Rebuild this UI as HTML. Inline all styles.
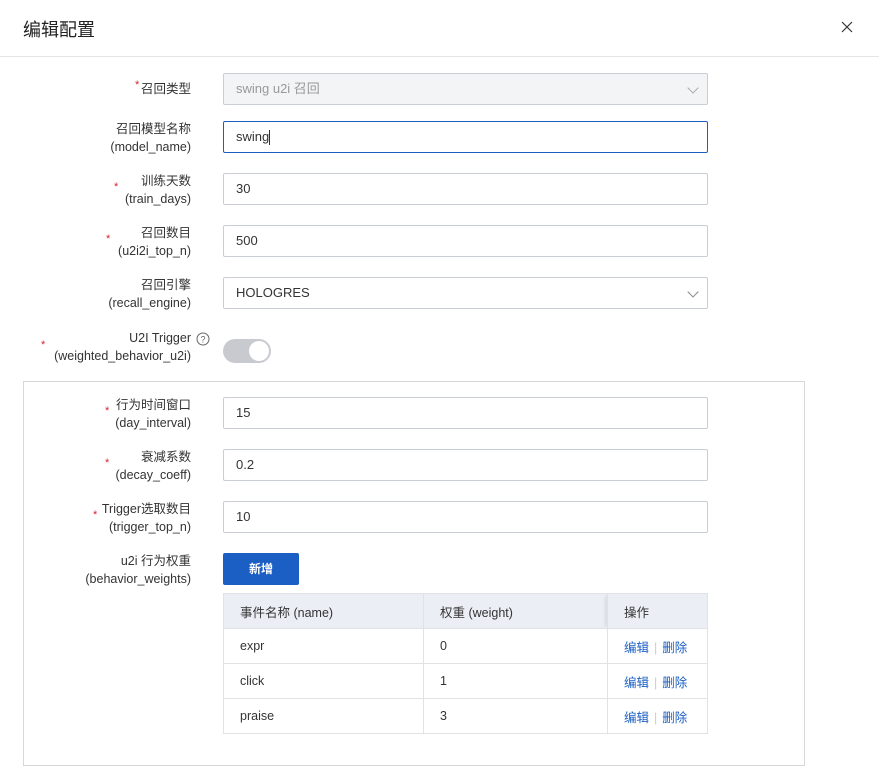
<!DOCTYPE html>
<html><head><meta charset="utf-8"><style>
*{box-sizing:border-box;margin:0;padding:0}
body{width:879px;height:778px;background:#fff;font-family:"Liberation Sans","Noto Sans CJK SC",sans-serif;color:#333;font-size:13px;position:relative;overflow:hidden}
.a{position:absolute}
.title{left:23px;top:16px;font-size:18px;color:#222}
.hr{left:0;top:56px;width:879px;height:1px;background:#e5e5e5}
.lbl{position:absolute;right:688px;text-align:right;line-height:18px;color:#333;font-size:12.5px}
.star{position:absolute;color:#d9232d;font-size:11px}
.inp{position:absolute;left:223px;width:485px;height:32px;border:1px solid #c9cdd4;border-radius:2px;padding-left:12px;line-height:30px;font-size:13px;color:#333;background:#fff}
.chev{position:absolute;right:10px;top:10px;width:8px;height:8px;border-right:1.3px solid #888;border-bottom:1.3px solid #888;transform:rotate(45deg)}
table{position:absolute;left:223px;top:593px;width:485px;border-collapse:collapse;font-size:12.5px}
td,th{border:1px solid #e0e2e6;height:35px;padding-left:16px;text-align:left;font-weight:normal;color:#333}
th{background:#ebeef5}
.lk{color:#1b5fc4}
.sep{color:#ccc;margin:0 5px}
</style></head><body>
<div class="a title">编辑配置</div>
<svg class="a" style="left:841px;top:21px" width="12" height="12" viewBox="0 0 12 12"><path d="M1 1L11 11M11 1L1 11" stroke="#333" stroke-width="1.2"/></svg>
<div class="a hr"></div>

<span class="star" style="left:135px;top:79px">*</span>
<div class="lbl" style="top:80px">召回类型</div>
<div class="inp" style="top:73px;background:#f3f4f6;color:#999">swing u2i 召回<span class="chev" style="border-color:#aaa"></span></div>

<div class="lbl" style="top:120px">召回模型名称<br>(model_name)</div>
<div class="inp" style="top:121px;border-color:#1b5fc4">swing<span style="display:inline-block;width:1px;height:15px;background:#333;vertical-align:middle"></span></div>

<span class="star" style="left:114px;top:181px">*</span>
<div class="lbl" style="top:172px">训练天数<br>(train_days)</div>
<div class="inp" style="top:173px">30</div>

<span class="star" style="left:106px;top:233px">*</span>
<div class="lbl" style="top:224px">召回数目<br>(u2i2i_top_n)</div>
<div class="inp" style="top:225px">500</div>

<div class="lbl" style="top:276px">召回引擎<br>(recall_engine)</div>
<div class="inp" style="top:277px">HOLOGRES<span class="chev"></span></div>

<span class="star" style="left:41px;top:339px">*</span>
<div class="lbl" style="top:329px;right:688px">U2I Trigger<br>(weighted_behavior_u2i)</div>
<svg class="a" style="left:196px;top:332px" width="14" height="14" viewBox="0 0 14 14"><circle cx="7" cy="7" r="6" fill="none" stroke="#666" stroke-width="1"/><text x="7" y="10.5" font-size="9" text-anchor="middle" fill="#666" font-family="Liberation Sans">?</text></svg>
<div class="a" style="left:223px;top:339px;width:48px;height:24px;border-radius:12px;background:#c8cacf"><div class="a" style="left:26px;top:2px;width:20px;height:20px;border-radius:10px;background:#fff"></div></div>

<div class="a" style="left:23px;top:381px;width:782px;height:385px;border:1px solid #d5d7db"></div>

<span class="star" style="left:105px;top:405px">*</span>
<div class="lbl" style="top:396px">行为时间窗口<br>(day_interval)</div>
<div class="inp" style="top:397px">15</div>

<span class="star" style="left:105px;top:457px">*</span>
<div class="lbl" style="top:448px">衰减系数<br>(decay_coeff)</div>
<div class="inp" style="top:449px">0.2</div>

<span class="star" style="left:93px;top:509px">*</span>
<div class="lbl" style="top:500px">Trigger选取数目<br>(trigger_top_n)</div>
<div class="inp" style="top:501px">10</div>

<div class="lbl" style="top:552px">u2i 行为权重<br>(behavior_weights)</div>
<div class="a" style="left:223px;top:553px;width:76px;height:32px;background:#1b5fc4;border-radius:2px;color:#fff;font-weight:bold;font-size:12px;text-align:center;line-height:32px">新增</div>

<table>
<tr><th style="width:200px">事件名称 (name)</th><th style="width:184px">权重 (weight)</th><th style="box-shadow:-4px 0 4px -2px rgba(0,0,0,.12)">操作</th></tr>
<tr><td>expr</td><td>0</td><td><span class="lk">编辑</span><span class="sep">|</span><span class="lk">删除</span></td></tr>
<tr><td>click</td><td>1</td><td><span class="lk">编辑</span><span class="sep">|</span><span class="lk">删除</span></td></tr>
<tr><td>praise</td><td>3</td><td><span class="lk">编辑</span><span class="sep">|</span><span class="lk">删除</span></td></tr>
</table>
</body></html>
